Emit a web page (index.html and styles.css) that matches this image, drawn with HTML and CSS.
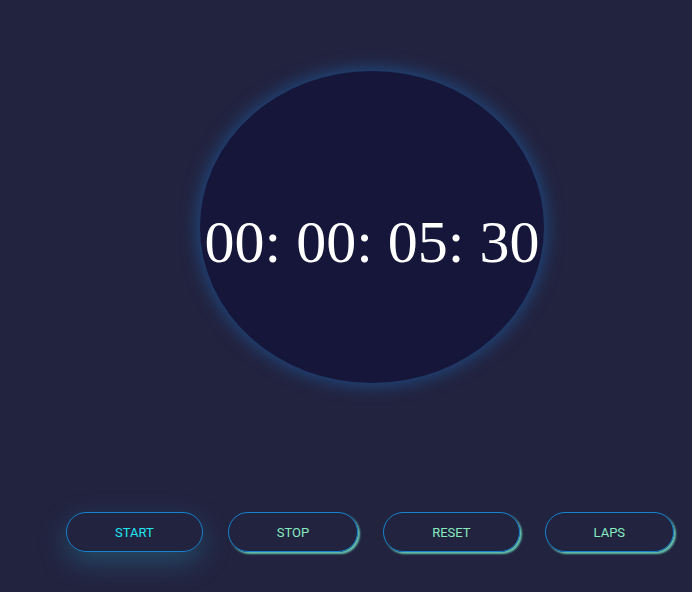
FILE: index.html
```html
<!DOCTYPE html>
<html>
<head>
<meta charset="utf-8">
<link rel="stylesheet" href="styles.css">
</head>
<body>
<main class="page">
  <div class="dial">
    <div class="time">00: 00: 05: 30</div>
  </div>
  <div class="controls">
    <button class="btn btn-start">START</button>
    <button class="btn">STOP</button>
    <button class="btn">RESET</button>
    <button class="btn">LAPS</button>
  </div>
</main>
</body>
</html>
```
FILE: styles.css
```css
html, body {
  margin: 0;
  padding: 0;
  background: #22233f;
  height: 100%;
  overflow: hidden;
}
.page {
  display: flex;
  flex-direction: column;
  align-items: flex-start;
  padding-top: 71px;
}
.dial {
  margin-left: 200px;
  width: 344px;
  height: 312px;
  border-radius: 50%;
  background: #15163a;
  box-shadow: 0 0 18px 2px rgba(30, 110, 190, 0.55);
  display: flex;
  align-items: center;
  justify-content: center;
}
.time {
  font-family: "Liberation Serif", "Times New Roman", serif;
  font-size: 60px;
  color: #ffffff;
  white-space: nowrap;
  margin-top: 30px;
}
.controls {
  margin-top: 129px;
  margin-left: 66px;
  display: flex;
  gap: 25px;
}
.btn {
  font-family: Roboto, "Liberation Sans", Arial, sans-serif;
  font-size: 13px;
  height: 40px;
  padding: 0 48px;
  border-radius: 20px;
  border: 1px solid #1583d0;
  background: transparent;
  color: #86ecc0;
  box-shadow: 2px 2px 2px rgba(110, 220, 190, 0.85);
  cursor: pointer;
}
.btn-start {
  color: #1fe6f4;
  box-shadow: 0 10px 28px rgba(40, 150, 180, 0.35);
}
```
